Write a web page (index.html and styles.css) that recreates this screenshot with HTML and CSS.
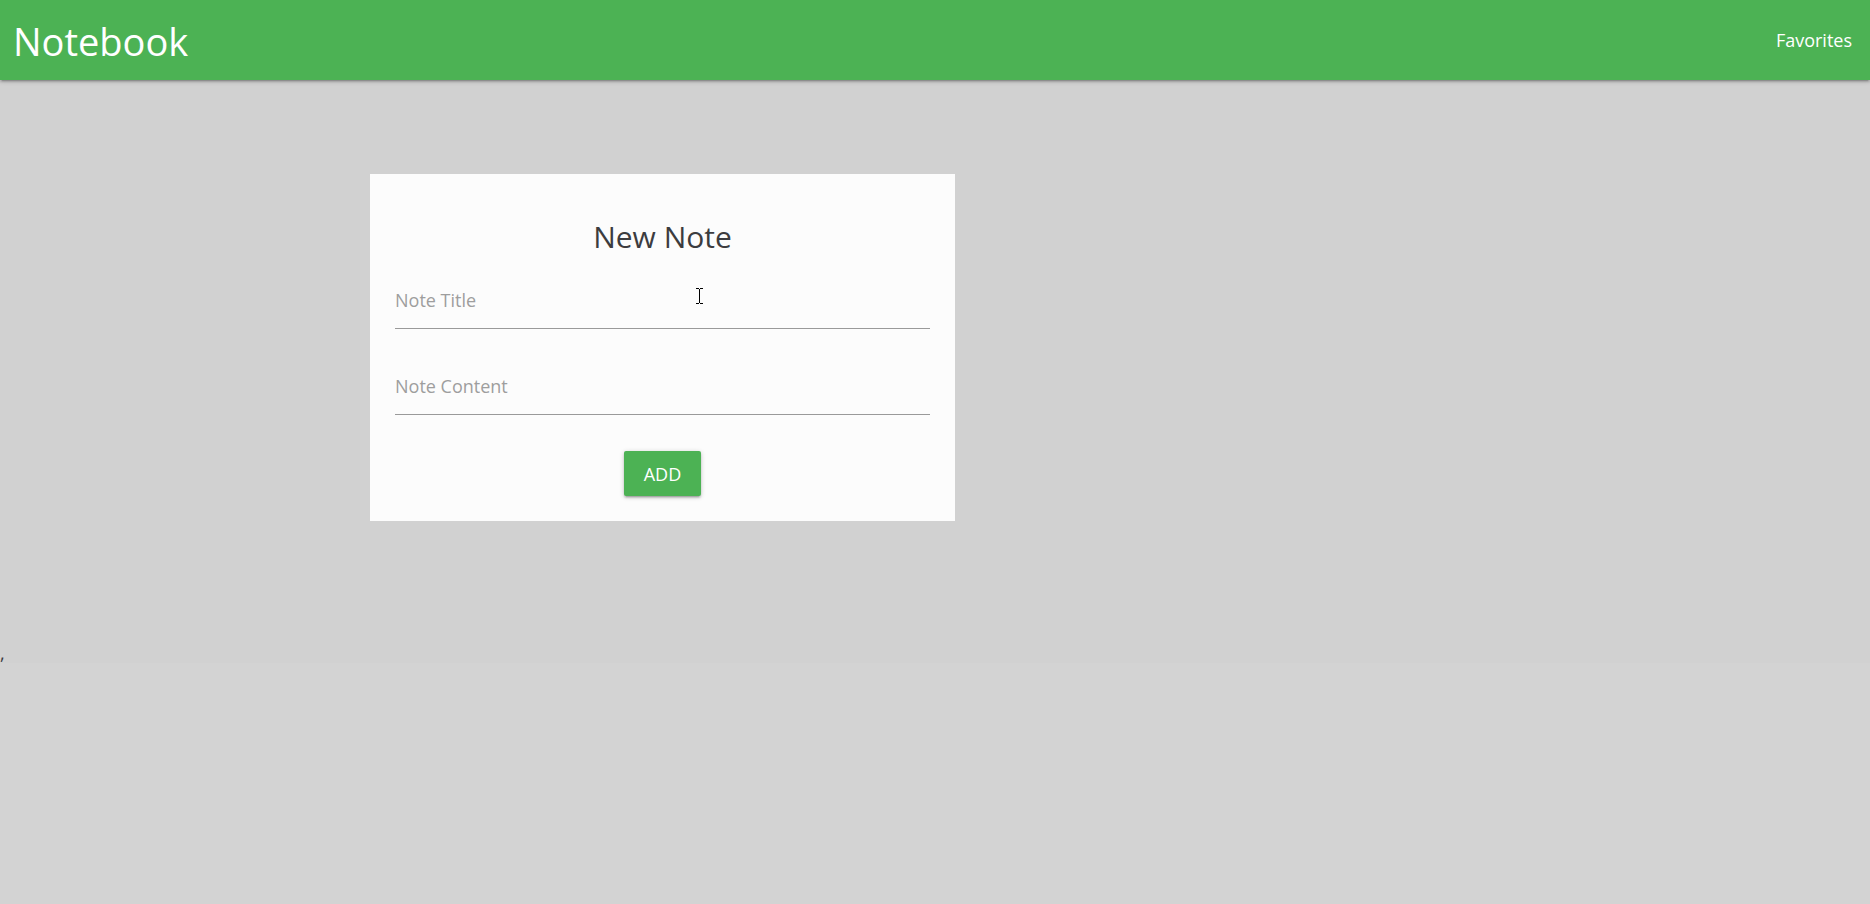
FILE: index.html
```html
<!DOCTYPE html>
<html lang="en">
<head>
<meta charset="utf-8">
<title>Notebook</title>
<link rel="stylesheet" href="styles.css">
</head>
<body>
<nav class="navbar">
  <a class="brand" href="#">Notebook</a>
  <a class="nav-link" href="#">Favorites</a>
</nav>
<main class="page">
  <form class="card">
    <h1 class="card-title">New Note</h1>
    <input class="field" type="text" placeholder="Note Title" aria-label="Note Title">
    <input class="field" type="text" placeholder="Note Content" aria-label="Note Content">
    <button class="add-button" type="button">ADD</button>
    <svg class="text-cursor" width="7" height="16" viewBox="0 0 7 16" shape-rendering="crispEdges" aria-hidden="true">
      <path d="M0 0h3v1H0zM4 0h3v1H4zM3 1h1v14H3zM0 15h3v1H0zM4 15h3v1H4z"/>
    </svg>
  </form>
</main>
<div class="notes">,</div>
</body>
</html>
```
FILE: styles.css
```css
* {
  box-sizing: border-box;
}

body {
  margin: 0;
  min-height: 100vh;
  background: #d3d3d3;
  color: #3c3c3f;
  font-family: "Segoe UI", "Open Sans", "Noto Sans", sans-serif;
  font-size: 18px;
  overflow-x: hidden;
}

.navbar {
  position: relative;
  display: flex;
  justify-content: space-between;
  align-items: center;
  height: 80px;
  padding: 0 18px 0 13px;
  background: #4cb254;
  box-shadow: 0 2px 2px rgba(0, 0, 0, 0.14), 0 3px 1px -2px rgba(0, 0, 0, 0.12), 0 1px 5px rgba(0, 0, 0, 0.2);
}

.brand,
.nav-link {
  color: #fff;
  text-decoration: none;
}

.brand {
  padding-top: 2px;
  font-size: 38px;
}

.page {
  display: grid;
  grid-template-columns: 370fr 585fr 915fr;
  padding: 94px 0 142px;
  background: #d1d1d1;
}

.card {
  position: relative;
  grid-column: 2;
  display: flex;
  flex-direction: column;
  align-items: center;
  padding: 41px 25px 25px;
  background: #fcfcfc;
}

.card-title {
  margin: 0 0 13px;
  font-size: 30px;
  font-weight: 400;
  line-height: 44px;
}

.field {
  width: 100%;
  height: 57px;
  margin-bottom: 29px;
  padding: 0;
  border: 0;
  border-bottom: 1px solid #9a9a9a;
  background: transparent;
  color: inherit;
  font: inherit;
  outline: 0;
}

.field::placeholder {
  color: #9e9e9e;
  opacity: 1;
}

.add-button {
  margin-top: 7px;
  height: 45px;
  padding: 0 20px;
  border: 0;
  border-radius: 2px;
  background: #4cb254;
  box-shadow: 0 2px 2px rgba(0, 0, 0, 0.14), 0 3px 1px -2px rgba(0, 0, 0, 0.12), 0 1px 5px rgba(0, 0, 0, 0.2);
  color: #fff;
  font: inherit;
}

.text-cursor {
  position: absolute;
  top: 114px;
  left: 326px;
}

.notes {
  margin-top: -20px;
  line-height: 20px;
}
```
